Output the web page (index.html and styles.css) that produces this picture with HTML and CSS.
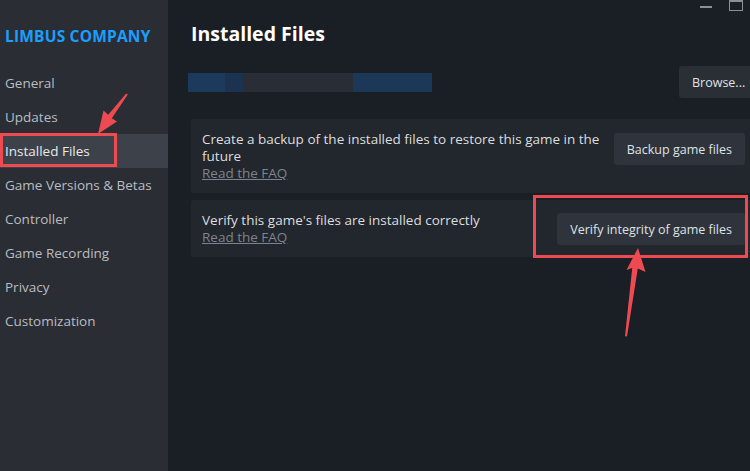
FILE: index.html
```html
<!DOCTYPE html>
<html>
<head>
<meta charset="utf-8">
<link rel="stylesheet" href="styles.css">
</head>
<body>
<div class="app">
  <aside class="sidebar">
    <div class="brand">LIMBUS COMPANY</div>
    <nav class="nav">
      <div class="nav-item">General</div>
      <div class="nav-item">Updates</div>
      <div class="nav-item active">Installed Files</div>
      <div class="nav-item">Game Versions &amp; Betas</div>
      <div class="nav-item">Controller</div>
      <div class="nav-item">Game Recording</div>
      <div class="nav-item">Privacy</div>
      <div class="nav-item">Customization</div>
    </nav>
  </aside>
  <main class="main">
    <h1 class="title">Installed Files</h1>
    <div class="path-row">
      <div class="path-bar">
        <span class="seg seg1"></span><span class="seg seg2"></span><span class="seg seg3"></span><span class="seg seg4"></span>
      </div>
      <button class="btn browse">Browse...</button>
    </div>
    <div class="card">
      <div class="card-text">
        <div class="desc">Create a backup of the installed files to restore this game in the future</div>
        <a class="faq">Read the FAQ</a>
      </div>
      <button class="btn backup">Backup game files</button>
    </div>
    <div class="card card2">
      <div class="card-text">
        <div class="desc">Verify this game's files are installed correctly</div>
        <a class="faq">Read the FAQ</a>
      </div>
      <button class="btn verify">Verify integrity of game files</button>
    </div>
  </main>
</div>
<div class="win-controls">
  <span class="minimize"></span>
  <span class="maximize"></span>
</div>
<svg class="annotations" width="750" height="471" viewBox="0 0 750 471">
  <rect x="1.5" y="134.5" width="114" height="31" fill="none" stroke="#ee4a52" stroke-width="3"/>
  <rect x="534.5" y="196.5" width="212" height="60" fill="none" stroke="#ee4a52" stroke-width="3"/>
  <polygon fill="#ee4a52" points="98,134 117,121.5 111.8,118.2 127.8,94.6 126.2,93.4 108.2,114.8 103.5,110.5"/>
  <polygon fill="#ee4a52" points="638,248 645.5,272 637.8,268.5 627,336.5 625,336.3 632.2,268 626.5,270"/>
</svg>
</body>
</html>
```
FILE: styles.css
```css
* { box-sizing: border-box; }
html, body {
  margin: 0;
  padding: 0;
  width: 750px;
  height: 471px;
  overflow: hidden;
  background: #1a1e25;
  font-family: "Open Sans", "Liberation Sans", Arial, sans-serif;
}
.app {
  display: flex;
  width: 750px;
  height: 471px;
}
.sidebar {
  width: 168px;
  flex: none;
  background: #2a2d33;
  padding-top: 26px;
}
.brand {
  color: #1a9fff;
  font-weight: 700;
  font-size: 15.5px;
  line-height: 20px;
  padding-left: 5px;
  letter-spacing: 0.2px;
  white-space: nowrap;
}
.nav {
  margin-top: 20px;
}
.nav-item {
  height: 34px;
  line-height: 34px;
  padding-left: 5px;
  color: #b9bdc2;
  font-size: 13.5px;
  white-space: nowrap;
}
.nav-item.active {
  background: #3d4149;
  color: #e8eaec;
}
.main {
  flex: none;
  width: 566px;
  padding-left: 23px;
  box-sizing: content-box;
}
.title {
  margin: 0;
  padding-top: 21px;
  font-size: 19.5px;
  line-height: 26px;
  font-weight: 700;
  color: #ffffff;
}
.path-row {
  display: flex;
  align-items: center;
  justify-content: space-between;
  margin-top: 19px;
  height: 32px;
}
.path-bar {
  display: flex;
  width: 244px;
  height: 19px;
  margin-left: -3px;
}
.seg { display: block; height: 100%; }
.seg1 { width: 37px; background: #1c3a5c; }
.seg2 { width: 18px; background: #1b3350; }
.seg3 { width: 110px; background: #282d36; }
.seg4 { width: 79px; background: #1c3858; }
.btn {
  font-family: inherit;
  border: none;
  border-radius: 3px;
  background: #2f333b;
  color: #dfe2e5;
  font-size: 12.5px;
  height: 32px;
  padding: 0 13px;
  white-space: nowrap;
  flex: none;
}
.browse {
  width: 78px;
  background: #2a2e35;
  padding: 0 13px;
  text-align: left;
}
.card {
  display: flex;
  align-items: flex-start;
  justify-content: space-between;
  background: #22262d;
  border-radius: 2px;
  margin-top: 21px;
  padding: 12px 12px 11px 11px;
}
.card2 {
  margin-top: 7px;
  padding-top: 11px;
  padding-bottom: 11px;
}
.card-text {
  width: 400px;
}
.desc {
  color: #dcdedf;
  font-size: 13.5px;
  line-height: 17px;
}
.card2 .desc { line-height: 18px; }
.faq {
  display: block;
  color: #7d848d;
  font-size: 13.5px;
  line-height: 17px;
  text-decoration: underline;
}
.backup {
  margin-top: 2px;
}
.verify {
  margin-top: 2px;
}
.win-controls {
  position: absolute;
  top: 0;
  left: 700px;
  width: 50px;
  height: 12px;
}
.minimize {
  position: absolute;
  left: 0;
  top: 6px;
  width: 12px;
  height: 1.5px;
  background: #8a9099;
}
.maximize {
  position: absolute;
  left: 29px;
  top: -2px;
  width: 14px;
  height: 13px;
  border: 1.5px solid #8a9099;
  border-top-width: 4px;
}
.annotations {
  position: absolute;
  left: 0;
  top: 0;
  pointer-events: none;
}
```
